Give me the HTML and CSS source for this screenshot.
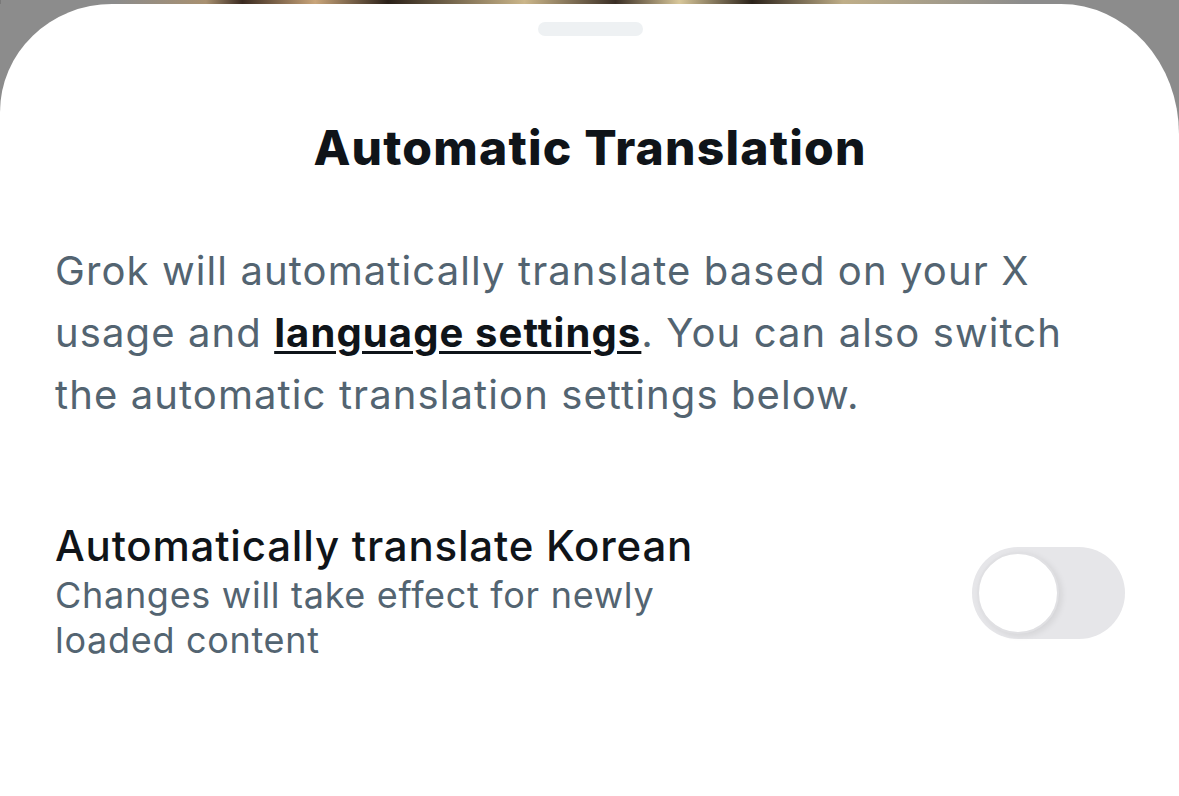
FILE: index.html
```html
<!DOCTYPE html>
<html lang="en">
<head>
<meta charset="utf-8">
<title>Automatic Translation</title>
<link rel="stylesheet" href="styles.css">
</head>
<body>
<div class="backdrop">
  <div class="backdrop-art"></div>
</div>
<div class="sheet">
  <div class="handle"></div>
  <h1 class="title">Automatic Translation</h1>
  <p class="desc">Grok will automatically translate based on your X usage and <a class="link" href="#">language settings</a>. You can also switch the automatic translation settings below.</p>
  <div class="setting">
    <div class="setting-text">
      <div class="setting-label">Automatically translate Korean</div>
      <div class="setting-hint">Changes will take effect for newly loaded content</div>
    </div>
    <div class="toggle" role="switch" aria-checked="false">
      <div class="knob"></div>
    </div>
  </div>
</div>
</body>
</html>
```

FILE: styles.css
```css
* { box-sizing: border-box; }
html, body {
  margin: 0;
  padding: 0;
  width: 1179px;
  height: 796px;
  overflow: hidden;
  background: #8c8c8c;
  font-family: Inter, "Liberation Sans", sans-serif;
}
body {
  display: flex;
  flex-direction: column;
}
.backdrop {
  height: 4px;
  display: flex;
  justify-content: center;
  border-left: 1px solid #7a7a7a;
}
.backdrop-art {
  width: 910px;
  height: 4px;
  margin-left: -40px;
  background: linear-gradient(90deg, #8c8c8c 0%, #a89070 10%, #3a2a20 14%, #c9a57a 22%, #2a2018 30%, #cbb68a 45%, #3a2e25 55%, #d8c79a 62%, #2b221a 70%, #bfae88 80%, #8c8c8c 100%);
}
.sheet {
  flex: 1;
  background: #ffffff;
  border-radius: 112px 118px 0 0 / 108px 130px 0 0;
  padding: 18px 54px 0 55px;
  display: flex;
  flex-direction: column;
}
.handle {
  align-self: center;
  width: 105px;
  height: 14px;
  border-radius: 7px;
  background: #eef1f3;
}
.title {
  margin: 84px 0 0;
  text-align: center;
  font-size: 48px;
  line-height: 56px;
  font-weight: 800;
  color: #0f1419;
  letter-spacing: 1.2px;
}
.desc {
  margin: 64px 0 0;
  width: 1050px;
  font-size: 40px;
  line-height: 62px;
  color: #536471;
  font-weight: 400;
  letter-spacing: 1.1px;
}
.link {
  color: #0f1419;
  font-weight: 700;
  text-decoration: underline;
  text-decoration-thickness: 3px;
  text-underline-offset: 4px;
}
.setting {
  margin-top: 93px;
  display: flex;
  align-items: center;
  justify-content: space-between;
}
.setting-text {
  width: 700px;
}
.setting-label {
  font-size: 42px;
  line-height: 54px;
  font-weight: 500;
  color: #0f1419;
  letter-spacing: 0.8px;
}
.setting-hint {
  font-size: 36px;
  line-height: 45px;
  color: #536471;
  letter-spacing: 0.7px;
  padding-right: 20px;
}
.toggle {
  width: 153px;
  height: 92px;
  border-radius: 46px;
  background: #e6e6e9;
  padding: 5px;
  display: flex;
  align-items: center;
  margin-top: 4px;
}
.knob {
  width: 82px;
  height: 82px;
  border-radius: 50%;
  background: #ffffff;
  border: 2px solid #e0e0e3;
  box-shadow: 3px 2px 6px rgba(0,0,0,0.08);
}
```
